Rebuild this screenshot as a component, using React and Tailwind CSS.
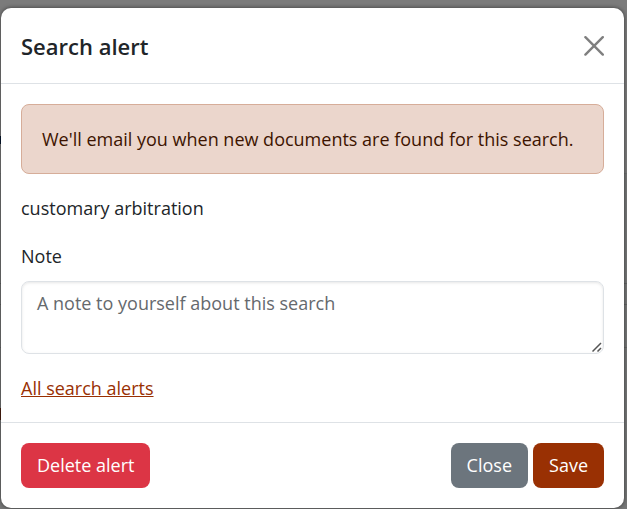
import React from "react";

function BackgroundPage() {
  return (
    <div aria-hidden="true" className="absolute inset-0 flex flex-col overflow-hidden bg-[#7b7b7b]">
      <div className="h-[136px]" />
      <div className="h-2 w-px bg-[#06172f]" />
      <div className="h-[29px]" />
      <div className="flex grow flex-col border-t border-[#6e7070] bg-[#767777] pt-[109px]">
        <div className="h-[22px] border-y border-[#626464]" />
        <div className="h-[43px] border-b border-[#666868]" />
        <div className="h-[60px]" />
        <div className="h-3 w-px bg-[#4d2010]" />
      </div>
    </div>
  );
}

function Button({ className, children }) {
  return (
    <button type="button" className={`h-[45px] cursor-pointer rounded-lg px-4 pb-0.5 text-white ${className}`}>
      {children}
    </button>
  );
}

export default function App() {
  return (
    <div className="relative min-h-screen pt-2 pr-[3px] pb-px pl-px font-['Open_Sans','Noto_Sans',sans-serif] text-lg leading-7 text-[#212529]">
      <BackgroundPage />
      <div
        role="dialog"
        aria-modal="true"
        aria-labelledby="alert-title"
        className="relative rounded-[10px] bg-white shadow-[0_0_4px_rgba(0,0,0,0.55)]"
      >
        <header className="flex h-[76px] items-center justify-between border-b border-[#dee2e6] px-5">
          <h1 id="alert-title" className="text-[22px] font-semibold">Search alert</h1>
          <button type="button" aria-label="Close dialog" className="cursor-pointer text-[#7f7f7f]">
            <svg viewBox="0 0 20 20" className="size-5" fill="none" stroke="currentColor" strokeWidth="2.4" strokeLinecap="round">
              <path d="M1.4 1.2 18.8 18.6M18.8 1.2 1.4 18.6" />
            </svg>
          </button>
        </header>
        <div className="p-5">
          <div role="alert" className="mb-5 rounded-lg border border-[#d6ad99] bg-[#ebd6cc] p-5 text-[#3d1400]">
            We'll email you when new documents are found for this search.
          </div>
          <p className="mb-5">customary arbitration</p>
          <label htmlFor="note" className="mb-[11px] block">Note</label>
          <div className="relative mb-5">
            <textarea
              id="note"
              placeholder="A note to yourself about this search"
              className="block h-[73px] w-full resize-none rounded-lg border border-[#dee2e6] px-[15px] py-[7px] shadow-[inset_0_1px_3px_rgba(0,0,0,0.1)] placeholder:text-[#65696d]"
            />
            <svg
              aria-hidden="true"
              viewBox="0 0 10 10"
              className="pointer-events-none absolute right-0.5 bottom-0.5 size-2.5"
              stroke="#555555"
              strokeWidth="1.5"
            >
              <path d="M.5 9.5 9 1M5.5 9.5 9 6" />
            </svg>
          </div>
          <a href="#alerts" className="block w-fit text-[#993003] underline">All search alerts</a>
        </div>
        <footer className="flex items-center gap-[5px] border-t border-[#dee2e6] p-5">
          <Button className="mr-auto bg-[#dc3545]">Delete alert</Button>
          <Button className="bg-[#6c757d]">Close</Button>
          <Button className="bg-[#993003]">Save</Button>
        </footer>
      </div>
    </div>
  );
}
